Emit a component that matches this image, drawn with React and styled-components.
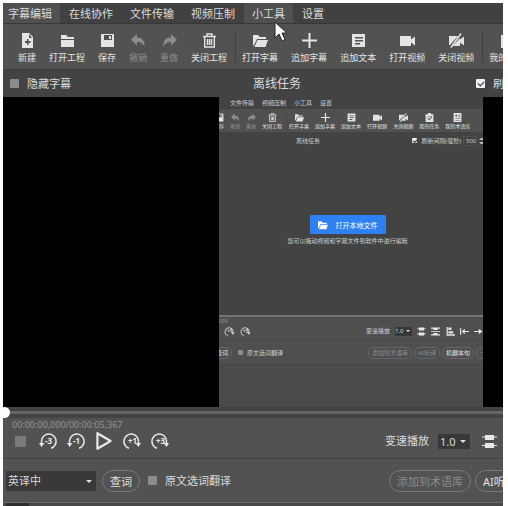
import React, { useState } from 'react';
import styled, { createGlobalStyle } from 'styled-components';

const GlobalStyle = createGlobalStyle`
  * {
    box-sizing: border-box;
  }

  body {
    margin: 0;
    background: #fff;
  }

  button, input, select {
    margin: 0;
    font-family: inherit;
  }

  svg {
    display: block;
    flex: none;
  }
`;

const Frame = styled.div`
  position: relative;
  display: flex;
  flex-direction: column;
  min-height: calc(100vh - 3px);
  margin: 3px 5px 0 3px;
  overflow: hidden;
  background: #525252;
  color: #dcdcdc;
  font-family: 'Noto Sans', 'Noto Sans CJK SC', sans-serif;
  font-size: 11px;
  line-height: 16px;
  white-space: nowrap;
`;

const MenuBar = styled.nav`
  display: flex;
  gap: 1px;
  height: 21px;
  background: #414141;
  border-bottom: 1px solid #383838;
`;

const MenuItem = styled.button`
  padding: 1px 8px 0;
  border: 0;
  background: ${p => (p.$active ? '#505050' : 'transparent')};
  color: inherit;
  font-size: 11px;
  line-height: 19px;

  &:first-child {
    padding-left: 5px;
  }
`;

const ToolBar = styled.div`
  display: flex;
  height: 46px;
  padding: 6px 0;
  background: #525252;
  border-bottom: 1px solid #3e3e3e;
`;

const ToolGroup = styled.div`
  display: flex;
  flex: none;
  gap: 13px;
  padding: 0 8px 0 6px;
  border-right: 1px solid #404040;

  &:first-child {
    padding-left: 15px;
  }

  &:last-child {
    border-right: 0;
  }
`;

const Tool = styled.button`
  display: flex;
  flex-direction: column;
  align-items: center;
  gap: 4px;
  padding: 3px 0 0;
  border: 0;
  background: none;
  color: ${p => (p.disabled ? '#8c8c8c' : '#e4e4e4')};
  font-size: 9px;
  line-height: 12px;
`;

const TaskBar = styled.div`
  display: grid;
  grid-template-columns: 1fr auto 1fr;
  align-items: center;
  height: 27px;
  margin-right: -48px;
  background: #434343;
`;

const TaskTitle = styled.h1`
  margin: 0;
  font-size: 12px;
  font-weight: 400;
`;

const Check = styled.label`
  display: flex;
  align-items: center;
  gap: 8px;
`;

const LeftCheck = styled(Check)`
  padding-left: 7px;
`;

const RightCheck = styled(Check)`
  justify-self: end;
  width: 75px;
`;

const Box = styled.input`
  flex: none;
  appearance: none;
  width: 9px;
  height: 9px;
  border-radius: 1px;
  background: #8b8b8b;

  &:checked {
    background: #f0f0f0;
  }

  &:checked::after {
    content: '';
    display: block;
    width: 5px;
    height: 3px;
    margin: 2px;
    border: solid #333;
    border-width: 0 0 1px 1px;
    transform: rotate(-45deg);
  }
`;

const Stage = styled.main`
  display: flex;
  flex: 1;
  padding: 0 4% 0 43.2%;
  background: #000;
`;

const SeekBar = styled.input`
  appearance: none;
  display: block;
  width: 100%;
  height: 11px;
  background: linear-gradient(#434343 4px, #656565 4px, #656565 7px, #434343 7px);

  &::-webkit-slider-thumb {
    appearance: none;
    width: 11px;
    height: 11px;
    margin-left: -4px;
    border-radius: 50%;
    background: #fff;
  }
`;

const Transport = styled.div`
  height: 41px;
  padding: 1px 0 0;
  border-bottom: 1px solid #424242;
`;

const Time = styled.div`
  padding-left: 9px;
  color: #929292;
  font-size: 9px;
  line-height: 12px;
`;

const TransportRow = styled.div`
  display: flex;
  align-items: center;
  height: 20px;
  padding-left: 7px;
`;

const TransportButtons = styled.div`
  display: flex;
  align-items: center;
  gap: 8px;
`;

const IconButton = styled.button`
  display: flex;
  justify-content: center;
  width: 20px;
  padding: 0;
  border: 0;
  background: none;
  color: #e8e8e8;
`;

const StopIcon = styled.span`
  width: 11px;
  height: 11px;
  background: #7a7a7a;
`;

const RightTools = styled.div`
  display: flex;
  flex: none;
  align-items: center;
  gap: ${p => p.$gap || 9}px;
  width: ${p => p.$width || 118}px;
  margin-left: auto;
`;

const SelectWrap = styled.div`
  position: relative;

  &::after {
    content: '';
    position: absolute;
    top: 50%;
    right: 4px;
    margin-top: -1px;
    border: 3px solid transparent;
    border-top-color: #e0e0e0;
    border-bottom: 0;
    pointer-events: none;
  }
`;

const Select = styled.select`
  appearance: none;
  display: block;
  width: ${p => p.$width}px;
  height: ${p => p.$height}px;
  padding: 0 2px;
  border: 0;
  background: #383838;
  color: #d8d8d8;
  font-size: 11px;
`;

const WordBar = styled.div`
  display: flex;
  align-items: center;
  height: 43px;
  padding-left: 3px;
`;

const WordTools = styled.div`
  display: flex;
  flex: none;
  align-items: center;
  gap: 6px;

  ${Check} {
    margin-left: 2px;
  }
`;

const Pill = styled.button`
  flex: none;
  height: 22px;
  padding: 0 7px;
  border: 1px solid #777;
  border-radius: 11px;
  background: transparent;
  color: ${p => (p.disabled ? '#8b8b8b' : '#e2e2e2')};
  font-size: 11px;
`;

const BottomTabs = styled.div`
  height: 4px;
  padding-left: 3px;
  border-top: 1px solid #6a6a6a;
  background: #484848;
`;

const BottomTab = styled.div`
  width: 23px;
  height: 3px;
  background: #2e2e2e;
`;

const Pointer = styled.svg`
  position: absolute;
  top: 18px;
  left: 271px;
`;

/* Recorded video shown on the stage */

const Preview = styled.section`
  display: flex;
  flex: 1;
  flex-direction: column;
  min-width: 0;
  overflow: hidden;
  background: #434343;
  color: #d0d0d0;
  font-size: 6px;
  line-height: 8px;
`;

const MiniMenu = styled.div`
  display: flex;
  gap: 8px;
  height: 12px;
  padding: 2px 0 0 11px;
`;

const MiniToolBar = styled.div`
  display: flex;
  height: 23px;
  margin-left: -5px;
  padding-top: 4px;
  background: #505050;
`;

const MiniGroup = styled.div`
  display: flex;
  flex: none;
  gap: 6px;
  padding-right: 4px;

  & + & {
    padding-left: 2px;
    border-left: 1px solid #464646;
  }
`;

const MiniTool = styled(Tool)`
  gap: 1px;
  padding: 0;
  font-size: 5px;
  line-height: 7px;
`;

const MiniTask = styled.div`
  display: flex;
  align-items: center;
  height: 17px;
  padding-left: 77px;
`;

const MiniCheck = styled(Check)`
  gap: 4px;

  ${Box} {
    width: 5px;
    height: 5px;
  }

  ${Box}:checked::after {
    width: 3px;
    height: 2px;
    margin: 1px;
  }
`;

const MiniRefresh = styled.div`
  display: flex;
  align-items: center;
  gap: 2px;
  margin-left: auto;
`;

const MiniNumber = styled.input`
  width: 14px;
  height: 10px;
  padding: 0 0 0 2px;
  border: 1px solid #505050;
  border-right: 0;
  background: transparent;
  color: #c8c8c8;
  font-size: 6px;
`;

const MiniSpin = styled.span`
  display: flex;
  flex-direction: column;
  justify-content: space-between;
  width: 4px;
  height: 6px;

  &::before,
  &::after {
    content: '';
    width: 4px;
    border: 2px solid transparent;
  }

  &::before {
    border-top: 0;
    border-bottom-color: #bbb;
  }

  &::after {
    border-bottom: 0;
    border-top-color: #bbb;
  }
`;

const MiniDrop = styled.div`
  display: flex;
  flex: 1;
  flex-direction: column;
  align-items: center;
  gap: 3px;
  padding: 66px 7px 0 0;
`;

const OpenButton = styled.button`
  display: flex;
  align-items: center;
  gap: 8px;
  height: 19px;
  padding: 0 8px;
  border: 0;
  border-radius: 1px;
  background: #2f80f2;
  color: #fff;
  font-size: 7px;
`;

const MiniTransport = styled.div`
  height: 26px;
  border-top: 2px solid #737373;
  border-bottom: 1px solid #454545;
  background: #4f4f4f;
`;

const MiniTime = styled.div`
  color: #969696;
  font-size: 5px;
  line-height: 8px;
`;

const MiniRow = styled.div`
  display: flex;
  align-items: center;
  height: 12px;
  padding-left: 6px;
`;

const MiniSelect = styled(SelectWrap)`
  &::after {
    right: 2px;
    border-width: 2px 2px 0;
  }

  ${Select} {
    padding: 0;
    font-size: 6px;
  }
`;

const MiniWords = styled.div`
  display: flex;
  align-items: center;
  gap: 6px;
  height: 23px;
  margin-left: -7px;
  background: #4f4f4f;
`;

const MiniPill = styled(Pill)`
  height: 12px;
  padding: 0 3px;
  border-radius: 6px;
  border-color: #666;
  font-size: 6px;
`;

const MiniFooter = styled.div`
  height: 43px;
  border-top: 1px solid #434343;
  background: #4b4b4b;
`;

const MiniIconButton = styled(IconButton)`
  width: ${p => p.$width || 12}px;
`;

const shapes = {
  file: (
    <path fillRule="evenodd" d="M2 0h7l4 4v11H2zM9 1v4h3zM7 6v2H5v2h2v2h1.500v-2h2V8h-2V6z" />
  ),
  folder: <path d="M1 2h5l2 2h6v2H1zM1 7h13v7H1z" />,
  save: <path fillRule="evenodd" d="M1 1h13v13H1zM4 2v5h8V2zM9 3h2v3H9z" />,
  undo: <path d="M6 1v3.500c5 0 8 3 7.500 9.500C12 10.500 10 9 6 9v3.500L0 6.700z" />,
  redo: <path d="M9 1v3.500c-5 0-8 3-7.500 9.500C3 10.500 5 9 9 9v3.500l6-5.800z" />,
  trash: (
    <g fill="none" stroke="currentColor" strokeWidth="1.4">
      <path d="M1 3.500h13M5 3V1h5v2M2.700 4v10h9.600V4M5.500 6v6M7.500 6v6M9.500 6v6" />
    </g>
  ),
  open: <path d="M0 2h5l2 2h6v2H4L1 12l-1 1zM4.500 7H15l-2.500 7H1.300z" />,
  plus: <path d="M6.500 0h2v6.500H15v2H8.500V15h-2V8.500H0v-2h6.500z" />,
  text: <path fillRule="evenodd" d="M1 1h13v13H1zM4 4v1.500h8V4zM4 7v1.500h8V7zM4 10v1.500h5V10z" />,
  video: <path d="M0 3h11v3.500l4-3v9l-4-3V13H0z" />,
  videoOff: (
    <path d="M0 3h9L1 12H0zM4 13l7-8v1.500l4-3v9l-4-3V13zM11.500 0l1.200 1L2.500 15l-1.200-1z" />
  ),
  task: <path fillRule="evenodd" d="M1 2h4V0h5v2h4v13H1zM4 5v1h7V5zM4 9l3 3 5-5-1-1-4 4-2-2z" />,
  book: <path fillRule="evenodd" d="M1 0h13v15H1zM4 3v3h3V3zM9 3v1h3V3zM9 6v1h3V6zM4 9v1h8V9zM4 12v1h8v-1z" />,
  play: (
    <path d="M2 1l11 6.500L2 14z" fill="none" stroke="currentColor" strokeWidth="1.800" strokeLinejoin="round" />
  ),
  middle: <path d="M3 1h9v1.500h3v1h-3V6H3V3.500H0v-1h3zM3 9h9v2h3v1h-3v2H3v-2H0v-1h3z" />,
  spread: <path d="M0 1h15v2h-4v2H4V3H0zM0 7h15v1.500H0zM4 10h7v2h4v2H0v-2h4z" />,
  left: <path d="M1 0h2v12h12v2.500H1zM4 1h5v4H4zM4 7h8v4H4z" />,
  toStart: <path d="M0 2h2v11H0zM8 3v3.500h7v2H8V12L3 7.500z" />,
  arrow: <path d="M0 6.500h8V3l6 4.500L8 12V8.500H0z" />
};

function Icon({ name, size = 15 }) {
  return (
    <svg width={size} height={size} viewBox="0 0 15 15" fill="currentColor" aria-hidden="true">
      {shapes[name]}
    </svg>
  );
}

// the arrow runs down the left side for "back" and is mirrored for "forward"
function SkipIcon({ label, size = 20 }) {
  const back = label[0] === '-';
  return (
    <svg width={size} height={size} viewBox="0 0 20 20" fill="currentColor">
      <g transform={back ? undefined : 'matrix(-1 0 0 1 20 0)'}>
        <path
          d="M3.500 13V10a7.300 7.300 0 1 1 9.500 7.300"
          fill="none"
          stroke="currentColor"
          strokeWidth="1.500"
        />
        <path d="M1 12h5.500l-3 4z" />
      </g>
      <text x="10.500" y="13" textAnchor="middle" fontSize="8" fontWeight="700">
        {label}
      </text>
    </svg>
  );
}

const menu = ['字幕编辑', '在线协作', '文件传输', '视频压制', '小工具', '设置'];

const toolGroups = [
  [
    { icon: 'file', label: '新建' },
    { icon: 'folder', label: '打开工程' },
    { icon: 'save', label: '保存' },
    { icon: 'undo', label: '撤销', disabled: true },
    { icon: 'redo', label: '重做', disabled: true },
    { icon: 'trash', label: '关闭工程' }
  ],
  [
    { icon: 'open', label: '打开字幕' },
    { icon: 'plus', label: '追加字幕' },
    { icon: 'text', label: '追加文本' },
    { icon: 'video', label: '打开视频' },
    { icon: 'videoOff', label: '关闭视频' }
  ],
  [{ icon: 'task', label: '我的任务' }]
];

const miniGroups = [
  toolGroups[0].slice(2),
  [...toolGroups[1], ...toolGroups[2], { icon: 'book', label: '我的术语库' }]
];

function VideoPreview() {
  return (
    <Preview>
      <MiniMenu>
        {menu.slice(2).map(item => (
          <span key={item}>{item}</span>
        ))}
      </MiniMenu>
      <MiniToolBar>
        {miniGroups.map((tools, i) => (
          <MiniGroup key={i}>
            {tools.map(({ icon, label, disabled }) => (
              <MiniTool key={label} disabled={disabled}>
                <Icon name={icon} size={9} />
                {label}
              </MiniTool>
            ))}
          </MiniGroup>
        ))}
      </MiniToolBar>
      <MiniTask>
        <span>离线任务</span>
        <MiniRefresh>
          <MiniCheck>
            <Box type="checkbox" defaultChecked />
            刷新间隔(毫秒)
          </MiniCheck>
          <MiniNumber aria-label="刷新间隔" defaultValue="500" />
          <MiniSpin />
        </MiniRefresh>
      </MiniTask>
      <MiniDrop>
        <OpenButton>
          <Icon name="open" size={10} />
          打开本地文件
        </OpenButton>
        <span>您可以拖动视频和字幕文件到软件中进行编辑</span>
      </MiniDrop>
      <MiniTransport>
        <MiniTime>000</MiniTime>
        <MiniRow>
          <TransportButtons>
            {['+1', '+3'].map(label => (
              <MiniIconButton key={label} $width={8}>
                <SkipIcon label={label} size={11} />
              </MiniIconButton>
            ))}
          </TransportButtons>
          <RightTools $gap={5} $width={117}>
            <label htmlFor="mini-speed">变速播放</label>
            <MiniSelect>
              <Select id="mini-speed" $width={17} $height={9}>
                <option>1.0</option>
              </Select>
            </MiniSelect>
            {['middle', 'spread', 'left', 'toStart', 'arrow'].map(name => (
              <MiniIconButton key={name} $width={10} aria-label={name}>
                <Icon name={name} size={9} />
              </MiniIconButton>
            ))}
          </RightTools>
        </MiniRow>
      </MiniTransport>
      <MiniWords>
        <MiniPill>查词</MiniPill>
        <MiniCheck>
          <Box type="checkbox" />
          原文选词翻译
        </MiniCheck>
        <RightTools $gap={2} $width={115}>
          <MiniPill disabled>添加到术语库</MiniPill>
          <MiniPill disabled>AI听译</MiniPill>
          <MiniPill>机翻本句</MiniPill>
          <MiniPill disabled>一键</MiniPill>
        </RightTools>
      </MiniWords>
      <MiniFooter />
    </Preview>
  );
}

export default function App() {
  const [position, setPosition] = useState(0);

  return (
    <Frame>
      <GlobalStyle />
      <MenuBar>
        {menu.map((item, i) => (
          <MenuItem key={item} $active={i === 0 || i === 4}>
            {item}
          </MenuItem>
        ))}
      </MenuBar>
      <ToolBar>
        {toolGroups.map((tools, i) => (
          <ToolGroup key={i}>
            {tools.map(({ icon, label, disabled }) => (
              <Tool key={label} disabled={disabled}>
                <Icon name={icon} />
                {label}
              </Tool>
            ))}
          </ToolGroup>
        ))}
      </ToolBar>
      <TaskBar>
        <LeftCheck>
          <Box type="checkbox" />
          隐藏字幕
        </LeftCheck>
        <TaskTitle>离线任务</TaskTitle>
        <RightCheck>
          <Box type="checkbox" defaultChecked />
          刷新间隔
        </RightCheck>
      </TaskBar>
      <Stage>
        <VideoPreview />
      </Stage>
      <SeekBar
        type="range"
        aria-label="播放进度"
        min="0"
        max="5367"
        value={position}
        onChange={ev => setPosition(Number(ev.target.value))}
      />
      <Transport>
        <Time>00:00:00,000/00:00:05,367</Time>
        <TransportRow>
          <TransportButtons>
            <IconButton aria-label="停止">
              <StopIcon />
            </IconButton>
            <IconButton>
              <SkipIcon label="-3" />
            </IconButton>
            <IconButton>
              <SkipIcon label="-1" />
            </IconButton>
            <IconButton aria-label="播放">
              <Icon name="play" size={18} />
            </IconButton>
            <IconButton>
              <SkipIcon label="+1" />
            </IconButton>
            <IconButton>
              <SkipIcon label="+3" />
            </IconButton>
          </TransportButtons>
          <RightTools>
            <label htmlFor="speed">变速播放</label>
            <SelectWrap>
              <Select id="speed" $width={32} $height={15}>
                <option>1.0</option>
              </Select>
            </SelectWrap>
            <IconButton aria-label="居中">
              <Icon name="middle" />
            </IconButton>
          </RightTools>
        </TransportRow>
      </Transport>
      <WordBar>
        <WordTools>
          <SelectWrap>
            <Select aria-label="翻译方向" $width={90} $height={20}>
              <option>英译中</option>
            </Select>
          </SelectWrap>
          <Pill>查词</Pill>
          <Check>
            <Box type="checkbox" />
            原文选词翻译
          </Check>
        </WordTools>
        <RightTools $gap={4} $width={114}>
          <Pill disabled>添加到术语库</Pill>
          <Pill>AI听译</Pill>
        </RightTools>
      </WordBar>
      <BottomTabs>
        <BottomTab />
      </BottomTabs>
      <Pointer width="13" height="21" viewBox="0 0 13 21">
        <path d="M1 1v16l4-4 3 7 3-1.500-3-6.500h5z" fill="#fff" stroke="#222" strokeWidth="1" />
      </Pointer>
    </Frame>
  );
}
